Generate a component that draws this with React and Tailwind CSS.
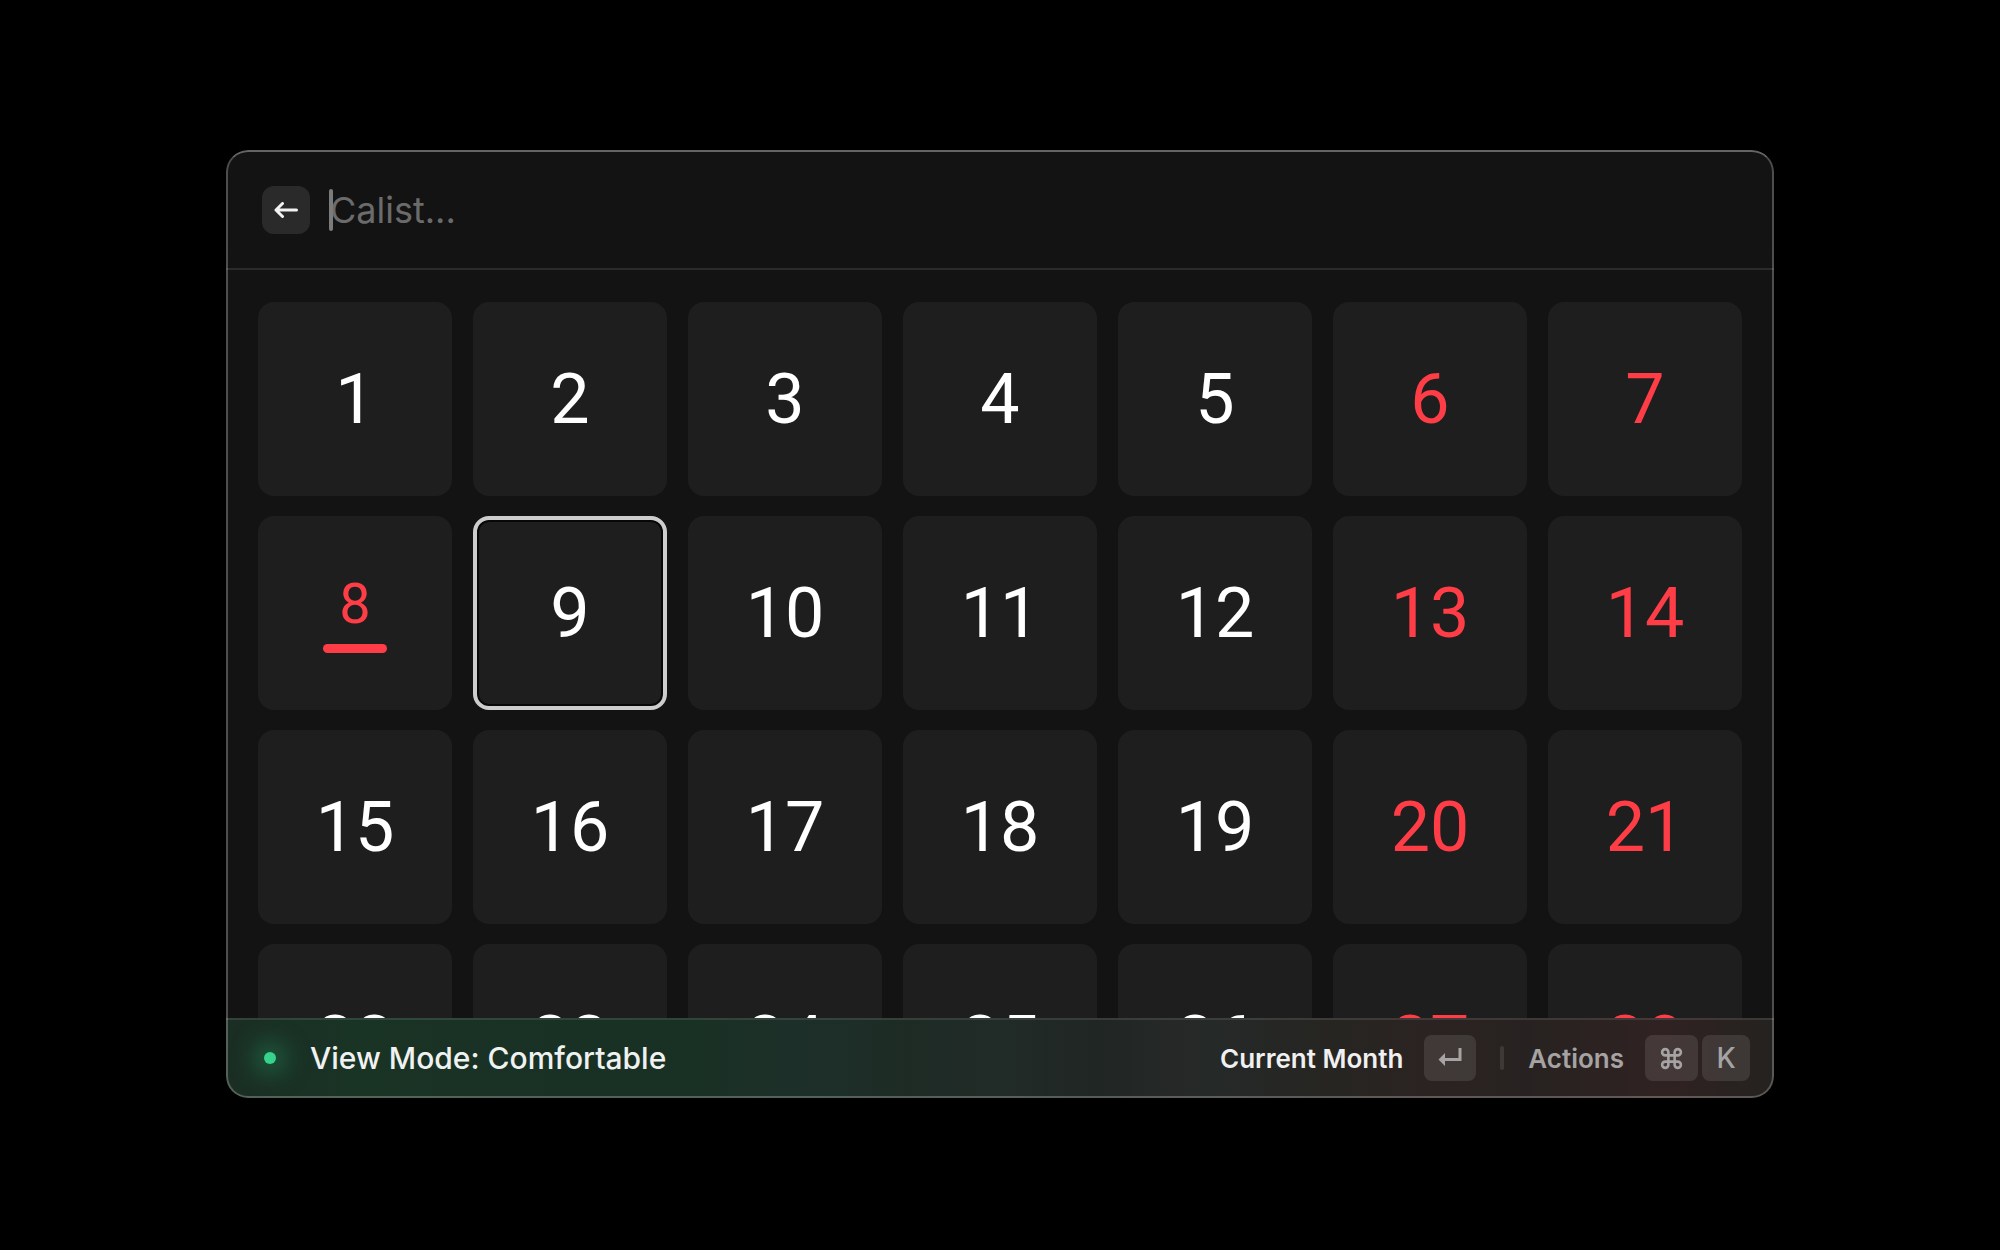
import React from "react";

const days = Array.from({ length: 28 }, (_, i) => i + 1);
const isWeekend = (d) => d % 7 === 6 || d % 7 === 0;

function DayCell({ day }) {
  const today = day === 8;
  const selected = day === 9;
  return (
    <button
      type="button"
      aria-current={today ? "date" : undefined}
      aria-pressed={selected}
      className={
        "flex aspect-square flex-col items-center justify-center rounded-2xl bg-[#1e1e1e] font-[450] " +
        (selected ? "border-4 border-[#cdcdcd] shadow-[inset_0_0_0_2px_#080808] " : "") +
        (today || isWeekend(day) ? "text-[#ff3d46]" : "text-white")
      }
    >
      {today ? (
        <>
          <span className="text-[56px] leading-[60px]">{day}</span>
          <span className="mt-[10px] h-[9px] w-16 rounded-full bg-[#ff3d46]" />
        </>
      ) : (
        <span className="text-[70px] leading-[80px]">{day}</span>
      )}
    </button>
  );
}

function Key({ children }) {
  return (
    <kbd className="flex h-[46px] min-w-12 items-center justify-center rounded-lg bg-white/10 px-[14px] font-['Inter',sans-serif] text-[28px] font-medium text-[#a5a3a3]">
      {children}
    </kbd>
  );
}

export default function App() {
  return (
    <div className="flex min-h-screen items-start justify-center bg-black py-[150px] font-['Inter',sans-serif]">
      <main className="relative w-full max-w-[1548px] overflow-hidden rounded-[22px] bg-[#131313]">
        <header className="flex h-[120px] items-center gap-4 border-b-2 border-[#2b2b2b] px-9 pt-0.5">
          <button
            type="button"
            aria-label="Back"
            className="flex size-12 shrink-0 items-center justify-center rounded-xl bg-[#2a2a2a] text-[#f2f2f2]"
          >
            <svg width="24" height="16" viewBox="0 0 24 16" fill="none" stroke="currentColor" strokeWidth="3" strokeLinecap="round" strokeLinejoin="round">
              <path d="M22.500 8H2M8.500 1.500L2 8l6.500 6.500" />
            </svg>
          </button>
          <div className="relative flex grow items-center">
            <span className="absolute left-[3px] h-[42px] w-1 rounded-full bg-[#7b7b7b]" />
            <input
              type="text"
              aria-label="Search"
              placeholder="Calist..."
              className="w-full bg-transparent pl-1 text-4xl text-white placeholder-[#6b6b6b] outline-none"
            />
          </div>
        </header>

        <section
          aria-label="Days"
          className="grid h-[748px] grid-cols-7 content-start gap-x-[21px] gap-y-5 overflow-y-auto px-8 pt-8 font-['Roboto',sans-serif] [scrollbar-width:none]"
        >
          {days.map((d) => (
            <DayCell key={d} day={d} />
          ))}
        </section>

        <footer className="flex h-20 items-center justify-between border-t-2 border-white/10 bg-[linear-gradient(90deg,#1b2e24_0%,#193325_8%,#193024_30%,#1d2f29_37%,#1e2b25_44%,#212b27_50%,#202623_56%,#252827_61%,#252928_64%,#262522_71%,#2b2322_78%,#272221_84%,#302222_93%,#242220_100%)] pr-6 pb-0.5 pl-[38px]">
          <div className="flex items-center gap-[34px]">
            <span className="size-3 rounded-full bg-[#35d38b] shadow-[0_0_24px_8px_#1f6b48]" />
            <span className="text-[30px] leading-10 font-medium text-[#f0f2f1]">View Mode: Comfortable</span>
          </div>
          <div className="flex items-center">
            <button type="button" className="flex items-center gap-[21px] text-[26px] font-semibold text-[#f0f0f0]">
              Current Month
              <Key>
                <svg width="24" height="22" viewBox="0 0 24 22" fill="currentColor">
                  <path d="M.500 12.500L7 6v5h13.500V1h3v13H7v5z" />
                </svg>
              </Key>
            </button>
            <span className="mx-6 h-6 w-1 rounded-full bg-white/10" />
            <button type="button" className="flex items-center gap-[21px] text-[26px] font-semibold text-[#a5a3a3]">
              Actions
              <span className="flex gap-1">
                <Key>
                  <svg width="25" height="25" viewBox="0 0 24 24" fill="none" stroke="currentColor" strokeWidth="2.500">
                    <path d="M15 6v12a3 3 0 1 0 3-3H6a3 3 0 1 0 3 3V6a3 3 0 1 0-3 3h12a3 3 0 1 0-3-3" />
                  </svg>
                </Key>
                <Key>K</Key>
              </span>
            </button>
          </div>
        </footer>
        <div className="pointer-events-none absolute inset-0 rounded-[22px] border-2 border-x-white/25 border-t-white/35 border-b-white/25" />
      </main>
    </div>
  );
}
